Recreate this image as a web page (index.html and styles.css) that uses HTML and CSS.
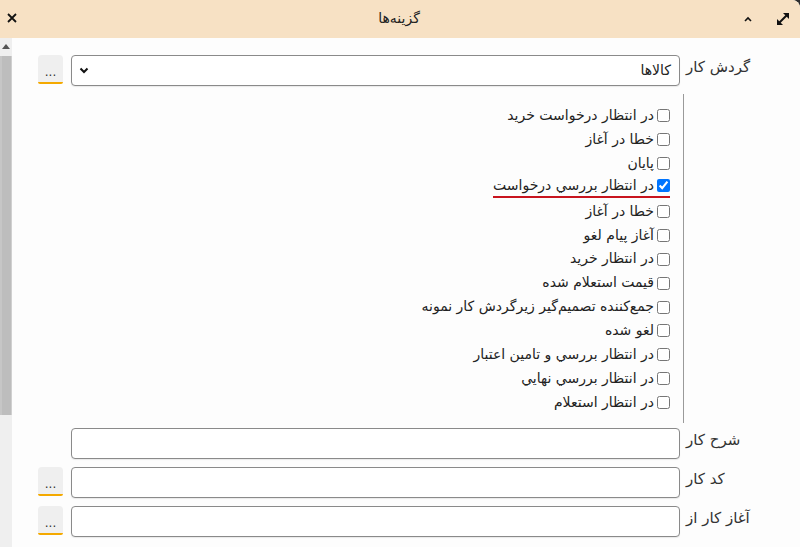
FILE: index.html
```html
<!DOCTYPE html>
<html lang="fa">
<head>
	<meta charset="UTF-8">
	<title>گزینه‌ها</title>
	<link rel="stylesheet" href="styles.css">
</head>
<body>
	<div class="dialog">
		<div class="titlebar">
			<span class="tb-btn tb-close">
				<svg width="10" height="10" viewBox="0 0 10 10"><path d="M1 1 L9 9 M9 1 L1 9" stroke="#111" stroke-width="1.8"/></svg>
			</span>
			<span class="tb-title">گزینه‌ها</span>
			<span class="tb-btn tb-collapse">
				<svg width="10" height="8" viewBox="0 0 10 8"><path d="M2 6 L5 3 L8 6" fill="none" stroke="#111" stroke-width="1.6"/></svg>
			</span>
			<span class="tb-btn tb-max">
				<svg width="16" height="16" viewBox="0 0 16 16">
					<path d="M3.5 12.5 L12.5 3.5" stroke="#111" stroke-width="2"/>
					<path d="M8 2 L14 2 L14 8 Z" fill="#111"/>
					<path d="M2 8 L2 14 L8 14 Z" fill="#111"/>
				</svg>
			</span>
		</div>

		<div class="body">
			<div class="scrollbar">
				<div class="sb-up">
					<svg width="8" height="5" viewBox="0 0 8 5"><path d="M0 5 L4 0 L8 5 Z" fill="#555"/></svg>
				</div>
				<div class="sb-thumb"></div>
			</div>

			<div class="form">
				<div class="row">
					<label class="lbl">گردش کار</label>
					<div class="field select">
						<span class="select-text">کالاها</span>
						<svg class="chev" width="10" height="7" viewBox="0 0 10 7"><path d="M1.5 1.5 L5 5 L8.5 1.5" fill="none" stroke="#111" stroke-width="2"/></svg>
					</div>
					<button class="more">...</button>
				</div>

				<div class="row list-row">
					<div class="lbl-empty"></div>
					<div class="checklist">
						<label class="item"><input type="checkbox"> در انتظار درخواست خريد</label>
						<label class="item"><input type="checkbox"> خطا در آغاز</label>
						<label class="item"><input type="checkbox"> پایان</label>
						<label class="item checked"><input type="checkbox" checked> در انتظار بررسي درخواست</label>
						<label class="item"><input type="checkbox"> خطا در آغاز</label>
						<label class="item"><input type="checkbox"> آغاز پیام لغو</label>
						<label class="item"><input type="checkbox"> در انتظار خريد</label>
						<label class="item"><input type="checkbox"> قیمت استعلام شده</label>
						<label class="item"><input type="checkbox"> جمع‌کننده تصمیم‌گیر زیرگردش کار نمونه</label>
						<label class="item"><input type="checkbox"> لغو شده</label>
						<label class="item"><input type="checkbox"> در انتظار بررسي و تامين اعتبار</label>
						<label class="item"><input type="checkbox"> در انتظار بررسي نهايي</label>
						<label class="item"><input type="checkbox"> در انتظار استعلام</label>
					</div>
				</div>

				<div class="row">
					<label class="lbl">شرح کار</label>
					<input class="field" type="text">
				</div>

				<div class="row">
					<label class="lbl">کد کار</label>
					<input class="field" type="text">
					<button class="more">...</button>
				</div>

				<div class="row">
					<label class="lbl">آغاز کار از</label>
					<input class="field" type="text">
					<button class="more">...</button>
				</div>
			</div>
		</div>
	</div>
</body>
</html>
```

FILE: styles.css
```css
* {
	margin: 0;
	padding: 0;
	box-sizing: border-box;
}

html, body {
	width: 800px;
	height: 547px;
	overflow: hidden;
	background: #2e2e2e;
}

body {
	font: 14px/1.4 "DejaVu Sans", sans-serif;
	color: #222;
}

.dialog {
	width: 800px;
	height: 547px;
	display: flex;
	flex-direction: column;
	background: #fdfdfd;
	border-top-right-radius: 8px;
	overflow: hidden;
}

/* title bar */
.titlebar {
	height: 38px;
	flex: none;
	display: flex;
	align-items: center;
	background: #f7e1c4;
	padding: 0 6px 0 6px;
}

.tb-btn {
	display: flex;
	align-items: center;
	justify-content: center;
}

.tb-close {
	width: 12px;
	margin-top: -2px;
}

.tb-title {
	flex: 1;
	text-align: center;
	font-size: 14px;
	color: #222;
	padding-left: 38px;
}

.tb-collapse {
	width: 12px;
	margin-right: 20px;
}

.tb-max {
	width: 18px;
	margin-right: 2px;
}

/* body */
.body {
	flex: 1;
	display: flex;
	min-height: 0;
}

.scrollbar {
	width: 12px;
	flex: none;
	background: #efefef;
	display: flex;
	flex-direction: column;
}

.sb-up {
	height: 18px;
	display: flex;
	justify-content: center;
	padding-top: 6px;
}

.sb-thumb {
	height: 359px;
	background: #bdbdbd;
	border-left: 2px solid #c6c6c6;
	border-right: 1px solid #d0d0d0;
}

.form {
	flex: 1;
	direction: rtl;
	padding-top: 17px;
}

.row {
	display: flex;
	align-items: flex-start;
	margin-bottom: 8px;
}

.lbl {
	width: 120px;
	flex: none;
	text-align: left;
	padding: 2px 0 0 6px;
	font-size: 15px;
	color: #333;
}

.field {
	width: 609px;
	height: 31px;
	flex: none;
	border: 1px solid #8a8a8a;
	border-radius: 4px;
	background: #fff;
	box-shadow: 0 1px 1px rgba(0,0,0,0.08);
	font: inherit;
}

.select {
	display: flex;
	align-items: center;
	justify-content: space-between;
	padding: 0 8px 0 7px;
}

.select-text {
	font-size: 14px;
	color: #222;
}

.more {
	width: 25px;
	height: 29px;
	margin-right: 8px;
	border: 0;
	border-bottom: 2px solid #f4a900;
	border-radius: 4px 4px 2px 2px;
	background: #efefef;
	font: 12px "DejaVu Sans", sans-serif;
	color: #333;
	padding-top: 7px;
}

/* check list */
.list-row {
	margin-top: 2px;
	margin-bottom: 5px;
}

.lbl-empty {
	width: 116px;
	flex: none;
}

.checklist {
	width: 613px;
	flex: none;
	border-right: 1px solid #9a9a9a;
	padding: 10px 13px 8px 0;
	display: flex;
	flex-direction: column;
	align-items: flex-start;
}

.item {
	height: 23.9px;
	display: inline-flex;
	align-items: center;
	font-size: 14px;
	color: #222;
	white-space: nowrap;
}

.item input {
	width: 13px;
	height: 13px;
	margin: 0 0 0 3px;
}

.item.checked {
	border-bottom: 2px solid #c8141e;
	height: 22px;
	margin-bottom: 1.9px;
}
```
